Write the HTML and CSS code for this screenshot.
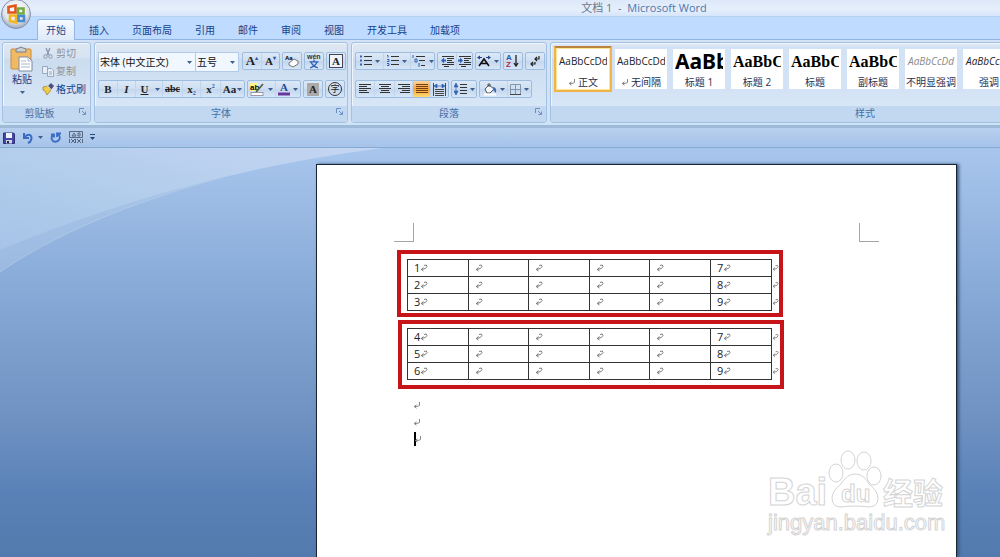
FILE: index.html
```html
<!DOCTYPE html>
<html lang="zh-CN">
<head>
<meta charset="utf-8">
<title>文档 1 - Microsoft Word</title>
<link rel="stylesheet" href="styles.css">
</head>
<body>
<svg class="defs" aria-hidden="true">
  <symbol id="caret" viewBox="0 0 5 3"><path d="M0 0h5L2.500 3z" fill="#3f5f8f"/></symbol>
  <symbol id="ret" viewBox="0 0 8 8"><path d="M4 1.500Q7 0 7 2.500Q6.500 5 1.500 5.500M3.500 3.500L1.200 5.500L3.500 7" fill="none" stroke="#707070" stroke-width=".9"/></symbol>
  <symbol id="para" viewBox="0 0 8 8"><path d="M6.500 1V4.500Q6 5.500 1.500 5.500M3.500 3.800L1.200 5.500L3.500 7.200" fill="none" stroke="#7a7a7a" stroke-width=".9"/></symbol>
  <symbol id="launch" viewBox="0 0 8 8"><path d="M.5 5V.5H5M3 3l3 3M6.500 3.500v3h-3" fill="none" stroke="#6b8fc0"/></symbol>
</svg>

<header class="titlebar"><h1 class="title"><span class="doc">文档 1 &nbsp;-&nbsp;</span> Microsoft Word</h1>
  <button class="office" aria-label="Office">
    <svg viewBox="0 0 32 32" width="32" height="32">
      <defs><radialGradient id="orb" cx=".5" cy=".35" r=".65"><stop offset="0" stop-color="#fff"/><stop offset=".65" stop-color="#e2e6ec"/><stop offset="1" stop-color="#98a6b9"/></radialGradient></defs>
      <circle cx="16" cy="16" r="14.500" fill="url(#orb)" stroke="#8392ab"/>
      <g fill="none" stroke-width="2.600"><path d="M8.500 9l7-1.500v7h-7z" stroke="#e2541b"/><path d="M18 10.500h5.500v5H18z" stroke="#76ad43"/><path d="M10 17.500h6v7l-6-1.500z" stroke="#f5b520"/><path d="M18.500 18H24v5h-5.500z" stroke="#4a8bd0"/></g>
    </svg>
  </button>
</header>

<nav class="tabs">
  <button class="tab active">开始</button><button class="tab">插入</button><button class="tab">页面布局</button><button class="tab">引用</button><button class="tab">邮件</button><button class="tab">审阅</button><button class="tab">视图</button><button class="tab">开发工具</button><button class="tab">加载项</button>
</nav>

<div class="ribbon">
  <section class="group">
    <div class="body clip">
      <button class="paste">
        <svg width="24" height="26" viewBox="0 0 24 26"><rect x="1" y="3" width="20" height="20" rx="1" fill="#f1b964" stroke="#c98c3c"/><path d="M6 4q0-2 3-2 2-2 4 0 3 0 3 2v2H6z" fill="#ccd0d4" stroke="#777d83"/><path d="M9 11h9l4 4v10H9z" fill="#fff" stroke="#7d8ca5"/><path d="M18 11v4h4M11 15h5M11 18h9M11 21h9" fill="none" stroke="#a9b8cf"/></svg>
        <span>粘贴</span>
        <svg class="caret"><use href="#caret"/></svg>
      </button>
      <div class="clipcol">
        <button class="mini off"><svg width="12" height="12" viewBox="0 0 12 12"><path d="M4 1l3 7M8 1L5 8" stroke="#8796ad" stroke-width="1.300"/><circle cx="3.500" cy="9.500" r="1.700" fill="none" stroke="#8796ad"/><circle cx="8.500" cy="9.500" r="1.700" fill="none" stroke="#8796ad"/></svg>剪切</button>
        <button class="mini off"><svg width="12" height="12" viewBox="0 0 12 12"><path d="M.5 1.500h5v7h-5zM5.500 3.500h4l2 2v6h-6z" fill="#e8eef7" stroke="#9aa9c0"/><path d="M7 7h3M7 9h3" stroke="#9aa9c0"/></svg>复制</button>
        <button class="mini"><svg width="12" height="12" viewBox="0 0 12 12"><path d="M1 4l5-1 3 4-4 5q-1-4-4-5z" fill="#f0cb45" stroke="#9a7b23" stroke-width=".7"/><path d="M6 3l3-3 3 3-3 4z" fill="#4b4f79"/><path d="M5.500 3l4 4" stroke="#fff"/></svg>格式刷</button>
      </div>
    </div>
    <footer class="label">剪贴板<svg class="launch"><use href="#launch"/></svg></footer>
  </section>

  <section class="group">
    <div class="body rows">
      <div class="row">
        <div class="combos">
          <label class="combo wide"><select aria-label="字体"><option>宋体 (中文正文)</option></select><svg class="caret"><use href="#caret"/></svg></label>
          <label class="combo size"><select aria-label="字号"><option>五号</option></select><svg class="caret"><use href="#caret"/></svg></label>
        </div>
        <div class="set"><button class="b w18 serif big">A<sup>▴</sup></button><button class="b w18 serif">A<sup>▾</sup></button></div>
        <div class="set"><button class="b w18" aria-label="清除格式"><svg width="16" height="14" viewBox="0 0 16 14"><text x="1" y="6" class="tiny">Aa</text><path d="M5 9l5-4 4 2v3l-5 3-4-2z" fill="#fff" stroke="#777"/></svg></button></div>
        <div class="set"><button class="b w18" aria-label="拼音指南"><svg width="16" height="16" viewBox="0 0 16 16"><text x="1" y="6" class="wen">wén</text><path d="M8 6.500v2M3.500 8.800h9M5 9q1.500 4 7 6M11 9q-1.500 4-7 6" fill="none" stroke="#2f5cb5" stroke-width="1.200"/></svg></button></div>
        <div class="set"><button class="b w18 serif"><span class="boxed">A</span></button></div>
      </div>
      <div class="row">
        <div class="set">
          <button class="b w18 serif">B</button><button class="b w18 serif it">I</button><button class="b w18 serif un">U</button><button class="b w10" aria-label="下划线"><svg class="caret"><use href="#caret"/></svg></button><button class="b w20 serif strike">abc</button><button class="b w18 serif">x<sub>2</sub></button><button class="b w20 serif">x<sup>2</sup></button><button class="b w23 serif aa">Aa<svg class="caret"><use href="#caret"/></svg></button>
        </div>
        <div class="set">
          <button class="b w18" aria-label="突出显示"><svg width="15" height="14" viewBox="0 0 15 14"><rect x="0" y="1" width="8" height="8" fill="#fff38a"/><text x="0" y="8" class="ab">ab</text><path d="M13 2L7 9l-1 1" stroke="#5c5c4a" stroke-width="1.800"/><rect x="1" y="10.500" width="12" height="3" fill="#fff" stroke="#99a"/></svg></button><button class="b w10" aria-label="突出显示颜色"><svg class="caret"><use href="#caret"/></svg></button><button class="b w16" aria-label="字体颜色"><svg width="14" height="14" viewBox="0 0 14 14"><text x="3" y="9" class="inkletter">A</text><path d="M1 12h12" stroke="#6a359c" stroke-width="3"/></svg></button><button class="b w10" aria-label="更多字体颜色"><svg class="caret"><use href="#caret"/></svg></button>
        </div>
        <div class="set"><button class="b w18 serif"><span class="shade">A</span></button></div>
        <div class="set"><button class="b w18"><span class="ring">字</span></button></div>
      </div>
    </div>
    <footer class="label">字体<svg class="launch"><use href="#launch"/></svg></footer>
  </section>

  <section class="group">
    <div class="body rows">
      <div class="row">
        <div class="set">
          <button class="b w28" aria-label="项目符号"><svg width="12" height="12" viewBox="0 0 12 12"><path d="M4 1.500h8M4 5.500h8M4 9.500h8" stroke="#333"/><path d="M0 1.500h2M0 5.500h2M0 9.500h2" stroke="#3562b5" stroke-width="2"/></svg><svg class="caret"><use href="#caret"/></svg></button>
          <button class="b w28" aria-label="编号"><svg width="12" height="12" viewBox="0 0 12 12"><path d="M4 1.500h8M4 5.500h8M4 9.500h8" stroke="#333"/><path d="M0 .5h1v2M0 4.500h2v2H0M0 8.500h2v2H0" fill="none" stroke="#3562b5"/></svg><svg class="caret"><use href="#caret"/></svg></button>
          <button class="b w23" aria-label="多级列表"><svg width="14" height="12" viewBox="0 0 14 12"><path d="M4 1.500h9M7 5.500h6M9 10.500h4" stroke="#333"/><path d="M1 0v3M3 4h2v3H3zM7 8v4" fill="none" stroke="#3562b5"/></svg><svg class="caret"><use href="#caret"/></svg></button>
        </div>
        <div class="set">
          <button class="b w18" aria-label="减少缩进"><svg width="13" height="12" viewBox="0 0 13 12"><path d="M1 1.500h12M6 3.500h7M6 5.500h5M6 7.500h7M1 9.500h12M3 11.500h5" stroke="#333"/><path d="M0 5.500l3-3v2h2v2H3v2z" fill="#3562b5"/></svg></button><button class="b w16" aria-label="增加缩进"><svg width="13" height="12" viewBox="0 0 13 12"><path d="M1 1.500h12M6 3.500h7M6 5.500h5M6 7.500h7M1 9.500h12M3 11.500h5" stroke="#333"/><path d="M5 5.500l-3-3v2H0v2h2v2z" fill="#3562b5"/></svg></button>
        </div>
        <div class="set"><button class="b w23" aria-label="中文版式"><svg width="14" height="13" viewBox="0 0 14 13"><path d="M2 11l5-7 5 7M4.500 8.500h5" fill="none" stroke="#111" stroke-width="1.600"/><path d="M0 2.500l3-2v4zM14 2.500l-3-2v4z" fill="#24418c"/><path d="M2 2.500h3M9 2.500h3" stroke="#24418c"/></svg><svg class="caret"><use href="#caret"/></svg></button></div>
        <div class="set"><button class="b w18" aria-label="排序"><svg width="14" height="14" viewBox="0 0 14 14"><text x="0" y="6" class="az">A</text><text x="0" y="13" class="az red">Z</text><path d="M10 1v11M8 9l2 3 2-3" fill="none" stroke="#222" stroke-width="1.300"/></svg></button></div>
        <div class="set"><button class="b w18" aria-label="显示编辑标记"><svg width="12" height="12" viewBox="0 0 12 12"><path d="M10 1v3H6M8 2L6 4l2 2M6 7v2H2M4 7L2 9l2 2" fill="none" stroke="#222" stroke-width="1.200"/></svg></button></div>
      </div>
      <div class="row">
        <div class="set">
          <button class="b w18" aria-label="左对齐"><svg width="12" height="10" viewBox="0 0 12 10"><path d="M0 .5h12M0 2.500h8M0 4.500h12M0 6.500h8M0 8.500h10" stroke="#333"/></svg></button><button class="b w20" aria-label="居中"><svg width="12" height="10" viewBox="0 0 12 10"><path d="M0 .5h12M2 2.500h8M0 4.500h12M2 6.500h8M1 8.500h10" stroke="#333"/></svg></button><button class="b w18" aria-label="右对齐"><svg width="12" height="10" viewBox="0 0 12 10"><path d="M0 .5h12M4 2.500h8M0 4.500h12M4 6.500h8M2 8.500h10" stroke="#333"/></svg></button><button class="b w18 on" aria-label="两端对齐"><svg width="12" height="10" viewBox="0 0 12 10"><path d="M0 .5h12M0 2.500h12M0 4.500h12M0 6.500h12M0 8.500h12" stroke="#75410f"/></svg></button><button class="b w18" aria-label="分散对齐"><svg width="13" height="13" viewBox="0 0 13 13"><path d="M.5 0v13M12.500 0v13M2 6.500h9M2 8.500h9M2 10.500h9M2 12.500h9" stroke="#444"/><path d="M1 3l3-2v4zM12 3L9 1v4zM3 3h7" fill="#3562b5" stroke="#3562b5" stroke-width=".7"/></svg></button>
        </div>
        <div class="set"><button class="b w23" aria-label="行距"><svg width="13" height="12" viewBox="0 0 13 12"><path d="M6 1.500h7M6 4.500h7M6 7.500h7M6 10.500h7" stroke="#333"/><path d="M0 4l2-4 2 4zM0 8l2 4 2-4zM2 3v6" fill="#3562b5" stroke="#3562b5" stroke-width=".7"/></svg><svg class="caret"><use href="#caret"/></svg></button></div>
        <div class="set">
          <button class="b w28" aria-label="底纹"><svg width="14" height="13" viewBox="0 0 14 13"><path d="M2 6l4-4 5 4-4 4H4z" fill="#f4f7fb" stroke="#555"/><path d="M5 4V1h2v3" fill="none" stroke="#555"/><path d="M10 4q4 0 3 6l-3-3z" fill="#3d6dbb"/><path d="M1 11.500h12" stroke="#fff" stroke-width="2"/></svg><svg class="caret"><use href="#caret"/></svg></button>
          <button class="b w23" aria-label="框线"><svg width="11" height="11" viewBox="0 0 11 11"><path d="M.5 .5h10v10H.5zM5.500 0v11M0 5.500h11" fill="none" stroke="#8496ae"/><path d="M0 10.500h11" stroke="#444"/></svg><svg class="caret"><use href="#caret"/></svg></button>
        </div>
      </div>
    </div>
    <footer class="label">段落<svg class="launch"><use href="#launch"/></svg></footer>
  </section>

  <section class="group styles">
    <div class="gallery">
      <button class="style sel"><span class="pv">AaBbCcDd</span><span><svg class="mark"><use href="#para"/></svg>正文</span></button>
      <button class="style"><span class="pv">AaBbCcDd</span><span><svg class="mark"><use href="#para"/></svg>无间隔</span></button>
      <button class="style"><span class="pv h1">AaBb</span><span>标题 1</span></button>
      <button class="style"><span class="pv h2">AaBbC</span><span>标题 2</span></button>
      <button class="style"><span class="pv h2">AaBbC</span><span>标题</span></button>
      <button class="style"><span class="pv h2">AaBbC</span><span>副标题</span></button>
      <button class="style"><span class="pv em faint">AaBbCcDd</span><span>不明显强调</span></button>
      <button class="style"><span class="pv em">AaBbCcDd</span><span>强调</span></button>
    </div>
    <footer class="label">样式</footer>
  </section>
</div>

<div class="quick">
  <button class="q" aria-label="保存"><svg width="12" height="12" viewBox="0 0 12 12"><path d="M.5 1h10l1 1v9.500H.5z" fill="#4646a3" stroke="#303078"/><path d="M3 1h6v5H3z" fill="#eef3fb"/><path d="M3 8h6v3.500H3z" fill="#cdd4e4"/><path d="M4 9h2v2.500H4z" fill="#23235e"/></svg></button>
  <button class="q" aria-label="撤消"><svg width="12" height="12" viewBox="0 0 12 12"><path d="M2 1v5h5M2.500 5.500Q5 2 8 3Q11 5 8 10L6 11" fill="none" stroke="#3a6cc4" stroke-width="2"/></svg><svg class="caret"><use href="#caret"/></svg></button>
  <button class="q" aria-label="恢复"><svg width="12" height="12" viewBox="0 0 12 12"><path d="M3 3Q0 6 3 9Q6 11 9 8Q11 5 8 2M1 2.500h3v3M7 5V1.500h4" fill="none" stroke="#3a6cc4" stroke-width="1.800"/></svg></button>
  <button class="q" aria-label="自定义"><svg width="14" height="13" viewBox="0 0 14 13"><path d="M.5 .5h13v6H.5zM3 5l2-3 2 3zM9 2h2v3H9zM.5 8v4M13.500 8v4M2 8l4 4M6 8l-4 4M8 8l4 4M12 8l-4 4M6.500 8v4" fill="none" stroke="#56677f"/></svg></button>
  <button class="q" aria-label="更多"><svg width="5" height="7" viewBox="0 0 5 7"><path d="M0 .5h5" stroke="#274677"/><path d="M0 3h5L2.500 6z" fill="#274677"/></svg></button>
</div>

<main class="workspace">
  <svg class="swoosh" width="400" height="130" viewBox="0 0 400 130" aria-hidden="true">
    <defs><linearGradient id="sky" x1="0" y1="1" x2="1" y2="0"><stop offset="0" stop-color="#a6c4e8"/><stop offset=".4" stop-color="#b1cceb"/><stop offset="1" stop-color="#c4d6f3"/></linearGradient></defs>
    <path d="M0 0H383Q185 25 0 102z" fill="url(#sky)"/>
    <path d="M0 102Q115 54 230 27Q80 68 0 124z" fill="#b5cde9" opacity=".4"/>
    <path d="M0 124Q80 68 230 27" fill="none" stroke="#b9d0ec" opacity=".6"/>
  </svg>
  <article class="page">
    <div class="corners"><i class="corner left"></i><i class="corner right"></i></div>
    <div class="frame first">
      <table class="grid">
        <tr><td>1<svg class="mark"><use href="#ret"/></svg></td><td><svg class="mark"><use href="#ret"/></svg></td><td><svg class="mark"><use href="#ret"/></svg></td><td><svg class="mark"><use href="#ret"/></svg></td><td><svg class="mark"><use href="#ret"/></svg></td><td>7<svg class="mark"><use href="#ret"/></svg></td><td class="end"><svg class="mark"><use href="#ret"/></svg></td></tr>
        <tr><td>2<svg class="mark"><use href="#ret"/></svg></td><td><svg class="mark"><use href="#ret"/></svg></td><td><svg class="mark"><use href="#ret"/></svg></td><td><svg class="mark"><use href="#ret"/></svg></td><td><svg class="mark"><use href="#ret"/></svg></td><td>8<svg class="mark"><use href="#ret"/></svg></td><td class="end"><svg class="mark"><use href="#ret"/></svg></td></tr>
        <tr><td>3<svg class="mark"><use href="#ret"/></svg></td><td><svg class="mark"><use href="#ret"/></svg></td><td><svg class="mark"><use href="#ret"/></svg></td><td><svg class="mark"><use href="#ret"/></svg></td><td><svg class="mark"><use href="#ret"/></svg></td><td>9<svg class="mark"><use href="#ret"/></svg></td><td class="end"><svg class="mark"><use href="#ret"/></svg></td></tr>
      </table>
    </div>
    <div class="frame second">
      <table class="grid">
        <tr><td>4<svg class="mark"><use href="#ret"/></svg></td><td><svg class="mark"><use href="#ret"/></svg></td><td><svg class="mark"><use href="#ret"/></svg></td><td><svg class="mark"><use href="#ret"/></svg></td><td><svg class="mark"><use href="#ret"/></svg></td><td>7<svg class="mark"><use href="#ret"/></svg></td><td class="end"><svg class="mark"><use href="#ret"/></svg></td></tr>
        <tr><td>5<svg class="mark"><use href="#ret"/></svg></td><td><svg class="mark"><use href="#ret"/></svg></td><td><svg class="mark"><use href="#ret"/></svg></td><td><svg class="mark"><use href="#ret"/></svg></td><td><svg class="mark"><use href="#ret"/></svg></td><td>8<svg class="mark"><use href="#ret"/></svg></td><td class="end"><svg class="mark"><use href="#ret"/></svg></td></tr>
        <tr><td>6<svg class="mark"><use href="#ret"/></svg></td><td><svg class="mark"><use href="#ret"/></svg></td><td><svg class="mark"><use href="#ret"/></svg></td><td><svg class="mark"><use href="#ret"/></svg></td><td><svg class="mark"><use href="#ret"/></svg></td><td>9<svg class="mark"><use href="#ret"/></svg></td><td class="end"><svg class="mark"><use href="#ret"/></svg></td></tr>
      </table>
    </div>
    <p class="line"><svg class="mark"><use href="#para"/></svg></p>
    <p class="line"><svg class="mark"><use href="#para"/></svg></p>
    <p class="line cursor"><svg class="mark"><use href="#para"/></svg></p>
    <svg class="watermark" width="190" height="100" viewBox="0 0 190 100">
      <g fill="#fff" stroke="#d4d4d4">
        <text x="6" y="62" class="wm-bai">Bai</text>
        <ellipse cx="74" cy="30" rx="7" ry="9"/><ellipse cx="86" cy="17" rx="7" ry="9"/><ellipse cx="102" cy="18" rx="7" ry="9"/><ellipse cx="112" cy="33" rx="7" ry="9"/>
        <path d="M93 31q9 0 14 10 9 7 9 14 0 9-9 9-7-1-14-1-7 0-14 1-9 0-9-9 0-7 9-14 6-10 14-10z"/>
        <text x="79" y="59" class="wm-du">du</text>
        <text x="121" y="61" class="wm-cn">经验</text>
        <text x="6" y="87" class="wm-url">jingyan.baidu.com</text>
      </g>
    </svg>
  </article>
</main>
</body>
</html>
```
FILE: styles.css
```css
* { box-sizing: border-box; }
body {
  margin: 0;
  height: 100vh;
  display: flex;
  flex-direction: column;
  overflow: hidden;
  font: 10px/14px "Open Sans", "Noto Sans CJK SC", sans-serif;
  color: #15428b;
}
button {
  margin: 0;
  padding: 0;
  border: 0;
  background: none;
  font: inherit;
  color: inherit;
}
svg { flex: none; }
.defs { position: absolute; width: 0; height: 0; }
.caret { width: 5px; height: 3px; }
.mark { width: 8px; height: 8px; }

.titlebar {
  position: relative;
  flex: none;
  height: 17px;
  padding-left: 288px;
  background: linear-gradient(#dde8f8, #e6effc 60%, #d6e5fa);
  border-bottom: 1px solid #b9d2f0;
}
.title {
  margin: 0;
  text-align: center;
  font-size: 11px;
  line-height: 16px;
  font-weight: 400;
  color: #4d77ac;
}
.doc { color: #6a7688; }
.office { position: absolute; left: 0; top: -2px; z-index: 2; }
.office svg { display: block; }

.tabs {
  flex: none;
  display: flex;
  gap: 5px;
  height: 23px;
  padding: 2px 0 0 37px;
  background: #bfdbff;
  border-bottom: 1px solid #8fb4e2;
}
.tab { padding: 0 9px; border: 1px solid transparent; border-width: 1px 0 0; }
.tab.active {
  height: 21px;
  border: 1px solid #92b5e1;
  border-bottom: 0;
  border-radius: 3px 3px 0 0;
  padding: 0 8px;
  background: linear-gradient(#f6faff, #deeaf8);
}

.ribbon {
  flex: none;
  display: flex;
  gap: 3px;
  padding: 2px 0 1px 2px;
  overflow: hidden;
  background: #d3e3f5;
  border-bottom: 1px solid #c4e6f5;
}
.group {
  flex: none;
  display: flex;
  flex-direction: column;
  height: 81px;
  border: 1px solid #a3c1e2;
  border-radius: 3px;
  background: linear-gradient(#dfe8f4, #d5e2f1 15px, #cbdcef 16px, #dceafa);
  box-shadow: inset 1px 1px #eef5fd;
}
.body { flex: 1; }
.label {
  position: relative;
  height: 16px;
  line-height: 15px;
  background: #c1d8f0;
  text-align: center;
  color: #4570ab;
}
.launch { position: absolute; right: 3px; top: 2px; width: 8px; height: 8px; }

.clip { display: flex; width: 87px; padding: 3px 0 0 7px; }
.clip + .label { padding-right: 14px; }
.paste { display: flex; flex-direction: column; align-items: center; width: 24px; height: 54px; }
.paste .caret { margin-top: 5px; }
.clipcol { display: flex; flex-direction: column; gap: 4px; padding: 0 0 0 8px; }
.mini { display: flex; align-items: center; gap: 2px; height: 14px; white-space: nowrap; }
.mini.off { color: #8d9199; }

.rows { display: flex; flex-direction: column; gap: 10px; padding: 9px 1px 0 3px; }
.row { display: flex; gap: 2px; height: 18px; }
.combos { display: flex; margin-right: 1px; }
.combo {
  display: flex;
  align-items: center;
  height: 20px;
  padding-right: 3px;
  border: 1px solid #b3cbe8;
  background: #f1f7fe;
}
.combo select {
  flex: 1;
  width: 20px;
  padding: 0 0 0 1px;
  border: 0;
  appearance: none;
  background: none;
  font: inherit;
  color: #111;
}
.combo.wide { width: 98px; }
.combo.size { width: 43px; border-left: 0; }
.set {
  display: flex;
  height: 18px;
  border: 1px solid #9dbde0;
  border-radius: 2px;
  background: linear-gradient(#dbe8f7, #cfdff1 50%, #c3d6ed 51%, #d7e6f8);
}
.b { display: flex; align-items: center; justify-content: center; gap: 3px; height: 16px; color: #222; }
.b + .b { border-left: 1px solid #c0d4ec; }
.w10 { width: 9px; }
.w16 { width: 16px; }
.w18 { width: 18px; }
.w20 { width: 20px; }
.w23 { width: 24px; }
.w28 { width: 27px; }
.b.w10 { border-left: 0; }
.serif { font: 700 11px/14px "Liberation Serif", serif; gap: 0; }
.serif sup, .serif sub { font-size: 6px; line-height: 6px; color: #2c57a8; }
.serif sup { align-self: flex-start; padding-top: 2px; }
.serif sub { align-self: flex-end; padding-bottom: 1px; }
.big { font-size: 13px; }
.it { font-style: italic; }
.un { text-decoration: underline; }
.strike { text-decoration: line-through; font-size: 10px; }
.aa { gap: 1px; }
.boxed { padding: 0 2px; line-height: 12px; border: 1px solid #445; background: #edf3fa; }
.shade { padding: 0 2px; line-height: 13px; background: #aaa; }
.inkletter { font: 700 11px "Liberation Serif", serif; fill: #264c99; }
.ring { width: 14px; border: 1px solid #333; border-radius: 7px; font-size: 9px; line-height: 12px; }
.wen { font: 700 7px "Liberation Sans", sans-serif; fill: #333; }
.tiny { font: 700 6px "Liberation Sans", sans-serif; }
.ab { font: 700 8px "Liberation Sans", sans-serif; }
.az { font: 700 8px "Liberation Sans", sans-serif; fill: #3157a5; }
.az.red { fill: #b02a3c; }
.on { background: linear-gradient(#fbd49a, #f7a13c 50%, #ffdc70); }

.styles { width: 630px; }
.gallery { flex: 1; display: flex; padding: 3px 0 0 3px; }
.style {
  flex: none;
  display: flex;
  flex-direction: column;
  justify-content: space-between;
  width: 58px;
  height: 46px;
  border: 3px solid #d3e3f5;
  background: #fff;
  color: #262f52;
  text-align: center;
  white-space: nowrap;
  overflow: hidden;
}
.style .mark { margin-right: 2px; }
.style.sel { border: 2px solid #efb44a; border-top-color: #b98441; padding: 1px; outline: 1px solid #ffe396; outline-offset: -3px; }
.pv { display: block; height: 24px; margin: 0 2px; overflow: hidden; line-height: 24px; color: #222; }
.pv.h1 { font: 700 21px/24px "Noto Sans", sans-serif; color: #000; text-align: left; }
.pv.h2 { font: 700 16px/26px "Liberation Serif", serif; color: #000; text-align: left; }
.pv.em { font-style: italic; }
.pv.faint { color: #8a8a8a; }

.quick {
  flex: none;
  display: flex;
  align-items: center;
  gap: 7px;
  height: 23px;
  padding: 0 3px;
  border-top: 3px solid #9fbad8;
  border-bottom: 1px solid #86a9d3;
  background: linear-gradient(#b8d0ef, #a6c3ea);
}
.q { display: flex; align-items: center; gap: 4px; }

.workspace {
  position: relative;
  flex: 1;
  display: flex;
  min-height: 0;
  padding: 16px 43px 0 316px;
  background: linear-gradient(#a8c6ed, #84a7d5 38%, #7092c2 66%, #5a82b8 84%, #527aad);
}
.swoosh { position: absolute; left: 0; top: 0; }
.page {
  position: relative;
  flex: 1;
  padding-top: 58px;
  border: 1px solid #1b2531;
  border-bottom: 0;
  background: #fff;
  box-shadow: 2px 0 3px #35557f;
}
.corners { display: flex; justify-content: space-between; padding: 0 77px; }
.corner { width: 20px; height: 19px; border-bottom: 1px solid #a5a5a5; }
.left { border-right: 1px solid #a5a5a5; }
.right { border-left: 1px solid #a5a5a5; }
.frame { width: 386px; border: 4px solid #c71418; padding: 5px 0 2px 6px; }
.first { margin: 8px 0 3px 80px; }
.second { margin: 0 0 7px 81px; padding: 4px 0 5px 5px; }
.grid { border-collapse: collapse; table-layout: fixed; width: 372px; color: #222; font-size: 11px; }
.grid td { height: 17px; padding: 0 0 0 6px; border: 1px solid #333; line-height: 16px; white-space: nowrap; }
.grid td.end { width: 8px; padding: 0; border-width: 0 0 0 1px; }
.grid td.end .mark { display: block; width: 7px; }
.line { display: flex; align-items: center; height: 17px; margin: 0 0 0 96px; }
.cursor::before { content: ""; width: 2px; height: 14px; background: #000; margin-right: -2px; margin-left: 1px; }
.watermark { position: absolute; left: 445px; top: 278px; }
.wm-bai { font: 700 38px "Liberation Sans", sans-serif; }
.wm-du { font: 700 24px "Liberation Sans", sans-serif; }
.wm-cn { font: 700 30px "Noto Sans CJK SC", sans-serif; }
.wm-url { font: 400 22px "Liberation Sans", sans-serif; }
```
